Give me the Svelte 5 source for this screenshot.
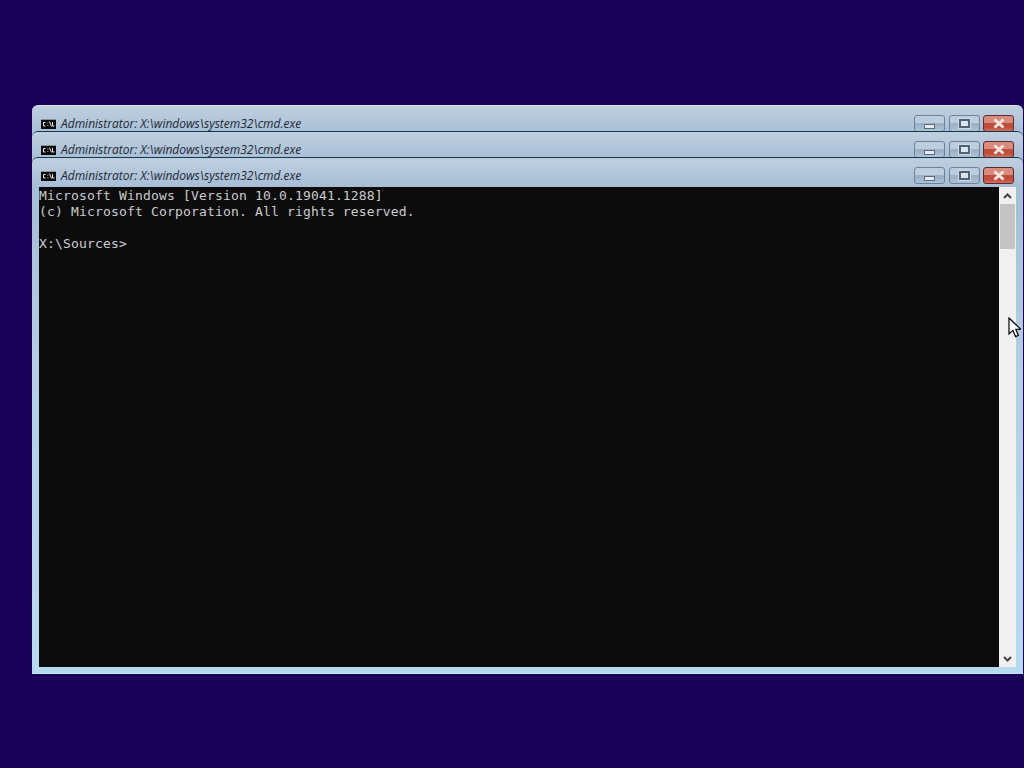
<script>
  const title = 'Administrator: X:\\windows\\system32\\cmd.exe';
  const lines = [
    'Microsoft Windows [Version 10.0.19041.1288]',
    '(c) Microsoft Corporation. All rights reserved.',
    '',
    'X:\\Sources>'
  ];
  const windows = [105, 131, 157];
</script>

{#snippet titlebar()}
  <div class="titlebar">
    <svg class="cmd-icon" width="15" height="10" viewBox="0 0 15 10">
      <rect width="15" height="10" fill="#0a0a0a" />
      <rect width="15" height="1" fill="#8a8f96" />
      <path d="M4.5 3.5H2.5v3.5h2M6.5 4h.8M6.5 6.5h.8M8.5 2.5l2 5M11.5 3v4H13.5" fill="none" stroke="#e8e8e8" stroke-width="1" />
    </svg>
    <span class="title">{title}</span>
    <div class="buttons">
      <div class="btn"><span class="glyph-min"></span></div>
      <div class="btn max"><span class="glyph-max"></span></div>
      <div class="btn close">
        <svg width="14" height="11" viewBox="0 0 14 11">
          <path d="M2.5 1.5l9 8M11.5 1.5l-9 8" stroke="#efe6e0" stroke-width="3" fill="none" />
        </svg>
      </div>
    </div>
  </div>
{/snippet}

<div class="desktop">
  {#each windows as top, i}
    <div class="window" class:first={i === 0} class:front={i === 2} style="top: {top}px">
      {@render titlebar()}
      {#if i === 2}
        <div class="client">
          <pre class="console">{lines.join('\n')}</pre>
          <div class="scrollbar">
            <svg class="arrow" width="9" height="6" viewBox="0 0 9 6">
              <path d="M1 5l3.5-3.5L8 5" fill="none" stroke="#454545" stroke-width="2" />
            </svg>
            <div class="track"><div class="thumb"></div></div>
            <svg class="arrow" width="9" height="6" viewBox="0 0 9 6">
              <path d="M1 1l3.5 3.5L8 1" fill="none" stroke="#454545" stroke-width="2" />
            </svg>
          </div>
        </div>
      {/if}
    </div>
  {/each}

  <svg class="cursor" width="13" height="22" viewBox="0 0 13 22">
    <path d="M1 1v16l4-3.6 2.6 6.2 2.8-1.2-2.6-6h5z" fill="#fff" stroke="#000" stroke-width="1.2" />
  </svg>
</div>

<style>
  :global(body) {
    margin: 0;
    background: #1a0056;
  }

  .desktop {
    position: relative;
    width: 1024px;
    height: 768px;
    overflow: hidden;
    background: #1a0056;
  }

  .window {
    position: absolute;
    left: 32px;
    width: 991px;
    height: 40px;
    box-sizing: border-box;
    padding: 0 7px;
    border-top: 1px solid #0f3a4e;
    border-radius: 6px 6px 0 0;
    background: linear-gradient(#bfcfdf, #a6bdd6 30px);
  }

  .window.first {
    border-top-color: #dce6ef;
  }

  .window.front {
    height: 517px;
    padding-bottom: 7px;
    display: flex;
    flex-direction: column;
    background: linear-gradient(#bfcfdf, #a6bdd6 30px, #b4cde4 200px, #b9daf0);
    box-shadow: inset 0 -1px 0 #c4e3f4;
  }

  .titlebar {
    position: relative;
    height: 29px;
    flex: none;
    display: flex;
    align-items: flex-end;
    gap: 5px;
    padding-left: 2px;
  }

  .cmd-icon {
    margin-bottom: 6px;
    flex: none;
  }

  .title {
    font-family: "Open Sans", sans-serif;
    font-style: italic;
    font-size: 12px;
    line-height: 16px;
    padding-bottom: 3px;
    color: #1c2733;
    white-space: nowrap;
  }

  .buttons {
    position: absolute;
    right: 2px;
    top: 9px;
    display: flex;
    gap: 3px;
  }

  .btn {
    width: 31px;
    height: 17px;
    box-sizing: border-box;
    border: 1px solid #6b8299;
    border-radius: 3px;
    display: flex;
    align-items: center;
    justify-content: center;
    background: linear-gradient(#bccde0 0 45%, #9db0c4 45% 60%, #b0c2d6);
  }

  .max {
    margin-left: 1px;
  }

  .close {
    border-color: #5e2a2c;
    background: linear-gradient(#d98c7e 0 45%, #c04c3c 45% 75%, #d0705f);
  }

  .glyph-min {
    width: 11px;
    height: 5px;
    margin-top: 5px;
    box-sizing: border-box;
    border: 1px solid #5a6c80;
    background: #e4ebf2;
  }

  .glyph-max {
    width: 11px;
    height: 9px;
    box-sizing: border-box;
    border: 2px solid #506276;
    outline: 1px solid #cfdbe7;
    background: #dbe5ee;
  }

  .client {
    flex: 1;
    display: flex;
    min-height: 0;
  }

  .console {
    flex: 1;
    margin: 0;
    padding: 1px 0 0;
    background: #0c0c0c;
    color: #cccccc;
    font-family: "DejaVu Sans Mono", monospace;
    font-size: 13px;
    letter-spacing: 0.17px;
    line-height: 16px;
  }

  .scrollbar {
    width: 17px;
    flex: none;
    display: flex;
    flex-direction: column;
    align-items: center;
    background: #f0f0f0;
  }

  .arrow {
    flex: none;
    margin: 6px 0 5px;
  }

  .track {
    flex: 1;
    width: 100%;
    box-sizing: border-box;
    padding: 0 1px;
  }

  .thumb {
    height: 45px;
    background: #c4c4c4;
  }

  .cursor {
    position: absolute;
    left: 1008px;
    top: 317px;
  }
</style>
